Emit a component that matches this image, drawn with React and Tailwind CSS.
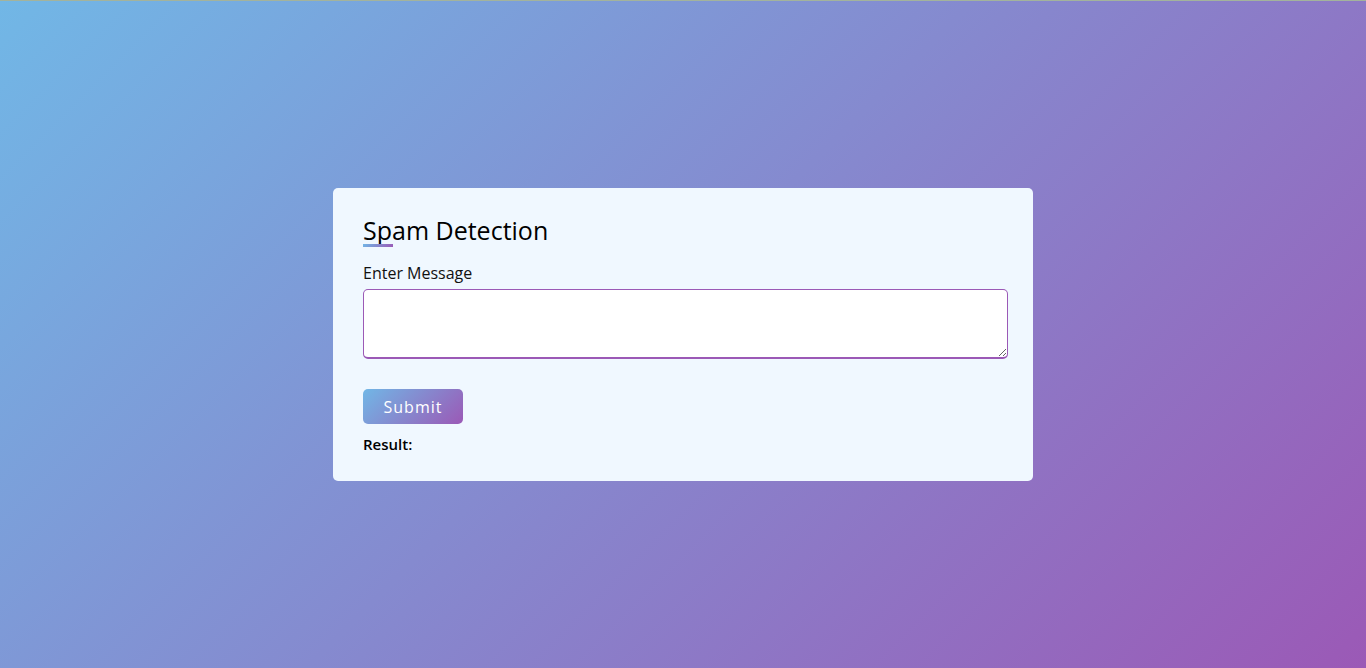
export default function App() {
  return (
    <div
      className="min-h-screen h-[668px] w-full flex items-center justify-center border-t border-[#a3b39c] bg-[linear-gradient(135deg,#71b7e6,#9b59b6)]"
      style={{ fontFamily: '"Open Sans", sans-serif' }}
    >
      <div className="w-[700px] bg-[#f0f8ff] rounded-[5px] px-[30px] pt-[25px] pb-[26px]">
        <div className="relative text-[25px] leading-[34px] text-black font-normal w-fit">
          Spam Detection
          <span className="absolute left-0 bottom-0 h-[3px] w-[30px] bg-[linear-gradient(135deg,#71b7e6,#9b59b6)]" />
        </div>
        <label className="block mt-[15px] text-[16px] leading-[22px] text-[#111]">Enter Message</label>
        <textarea className="block mt-[5px] w-[645px] h-[70px] bg-white border border-b-2 border-[#9b59b6] rounded-[5px] outline-none" />
        <button
          type="button"
          className="mt-[30px] w-[100px] h-[35px] rounded-[5px] text-white text-[16px] tracking-[1px] bg-[linear-gradient(135deg,#71b7e6,#9b59b6)]"
        >
          Submit
        </button>
        <div className="mt-[9px] text-[15px] leading-[22px] font-semibold text-black">Result:</div>
      </div>
    </div>
  )
}
